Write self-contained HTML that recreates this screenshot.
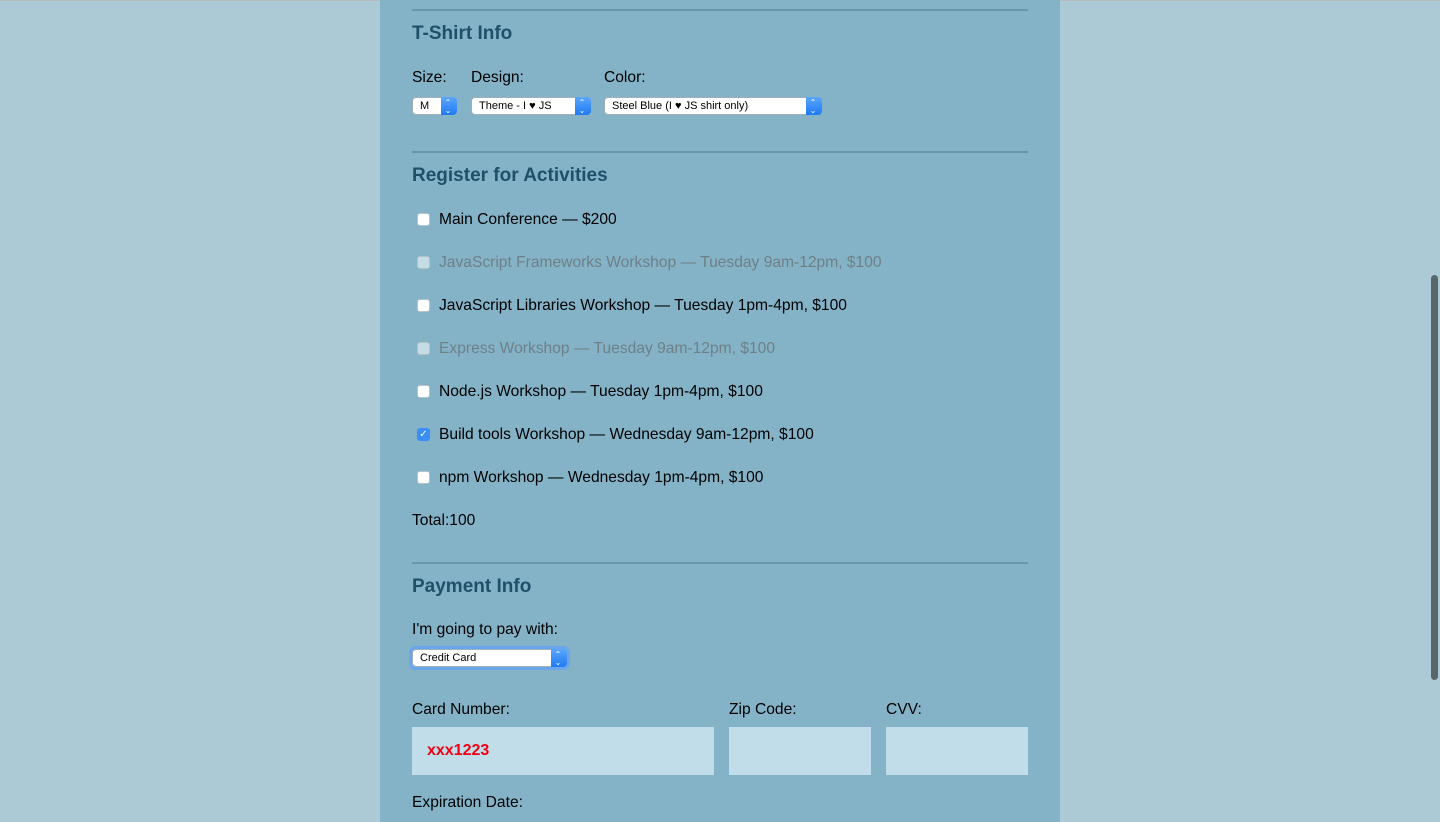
<!DOCTYPE html>
<html><head><meta charset="utf-8"><style>
*{margin:0;padding:0;box-sizing:border-box}
body{width:1440px;height:822px;overflow:hidden;background:#abcad5;font-family:"Liberation Sans",sans-serif;position:relative}
.topline{position:absolute;left:0;top:0;width:1440px;height:1px;background:#b8b8b8}
.main{position:absolute;left:380px;top:0;width:680px;height:822px;background:#84b3c8}
.a{position:absolute;white-space:nowrap}
.hr{position:absolute;left:412px;width:616px;height:2px;background:#6797ab}
h2{position:absolute;font-size:19px;font-weight:bold;color:#1f506a;left:412px;white-space:nowrap}
.lbl{font-size:15.6px;color:#000}
.sel{position:absolute;height:18px;background:#fff;border-radius:4px;border:1px solid #9fb0bb;font-size:11px;line-height:16px;padding-left:7px;color:#000;white-space:nowrap}
.sel:after{content:"";position:absolute;right:-1px;top:-1px;width:16px;height:18px;background:linear-gradient(#5aa6fb,#1f7af3);border-radius:0 4px 4px 0}
.sel i{position:absolute;right:3px;z-index:2;color:#fff;font-style:normal;font-size:8px;line-height:8px;width:10px;text-align:center;top:1px}
.cb{position:absolute;left:417px;width:13px;height:13px;background:#fff;border-radius:3px;border:1px solid #b5c4cc}
.cb.d{background:#c6dbe3;border-color:#aec3cc}
.cb.c{background:#3a8ef5;border-color:#3a8ef5;color:#fff;font-size:10px;line-height:11px;text-align:center}
.act{position:absolute;left:439px;font-size:15.6px;color:#000;white-space:nowrap}
.act.d{color:#6f7f86}
.inp{position:absolute;top:727px;height:48px;background:#c1dde9}
.sb{position:absolute;left:1431px;top:275px;width:7px;height:405px;background:#58676c;border-radius:4px}
</style></head><body>
<div class="topline"></div>
<div class="main"></div>
<div class="hr" style="top:9px"></div>
<h2 style="top:23px">T-Shirt Info</h2>
<div class="a lbl" style="left:412px;top:69px">Size:</div>
<div class="a lbl" style="left:471px;top:69px">Design:</div>
<div class="a lbl" style="left:604px;top:69px">Color:</div>
<div class="sel" style="left:412px;top:97px;width:45px">M<i>⌃<br>⌄</i></div>
<div class="sel" style="left:471px;top:97px;width:120px">Theme - I ♥ JS<i>⌃<br>⌄</i></div>
<div class="sel" style="left:604px;top:97px;width:218px">Steel Blue (I ♥ JS shirt only)<i>⌃<br>⌄</i></div>
<div class="hr" style="top:151px"></div>
<h2 style="top:165px">Register for Activities</h2>
<div class="cb" style="top:213px"></div><div class="act" style="top:211px">Main Conference — $200</div>
<div class="cb d" style="top:256px"></div><div class="act d" style="top:254px">JavaScript Frameworks Workshop — Tuesday 9am-12pm, $100</div>
<div class="cb" style="top:299px"></div><div class="act" style="top:297px">JavaScript Libraries Workshop — Tuesday 1pm-4pm, $100</div>
<div class="cb d" style="top:342px"></div><div class="act d" style="top:340px">Express Workshop — Tuesday 9am-12pm, $100</div>
<div class="cb" style="top:385px"></div><div class="act" style="top:383px">Node.js Workshop — Tuesday 1pm-4pm, $100</div>
<div class="cb c" style="top:428px">✓</div><div class="act" style="top:426px">Build tools Workshop — Wednesday 9am-12pm, $100</div>
<div class="cb" style="top:471px"></div><div class="act" style="top:469px">npm Workshop — Wednesday 1pm-4pm, $100</div>
<div class="a lbl" style="left:412px;top:512px">Total:100</div>
<div class="hr" style="top:562px"></div>
<h2 style="top:576px">Payment Info</h2>
<div class="a lbl" style="left:412px;top:621px">I'm going to pay with:</div>
<div class="sel" style="left:412px;top:649px;width:155px;box-shadow:0 0 0 3px #6aa6ec">Credit Card<i>⌃<br>⌄</i></div>
<div class="a lbl" style="left:412px;top:701px">Card Number:</div>
<div class="a lbl" style="left:729px;top:701px">Zip Code:</div>
<div class="a lbl" style="left:886px;top:701px">CVV:</div>
<div class="inp" style="left:412px;width:302px"><span class="a" style="left:15px;top:15px;color:#f00010;font-size:16px;font-weight:bold">xxx1223</span></div>
<div class="inp" style="left:729px;width:142px"></div>
<div class="inp" style="left:886px;width:142px"></div>
<div class="a lbl" style="left:412px;top:794px">Expiration Date:</div>
<div class="sb"></div>
</body></html>
